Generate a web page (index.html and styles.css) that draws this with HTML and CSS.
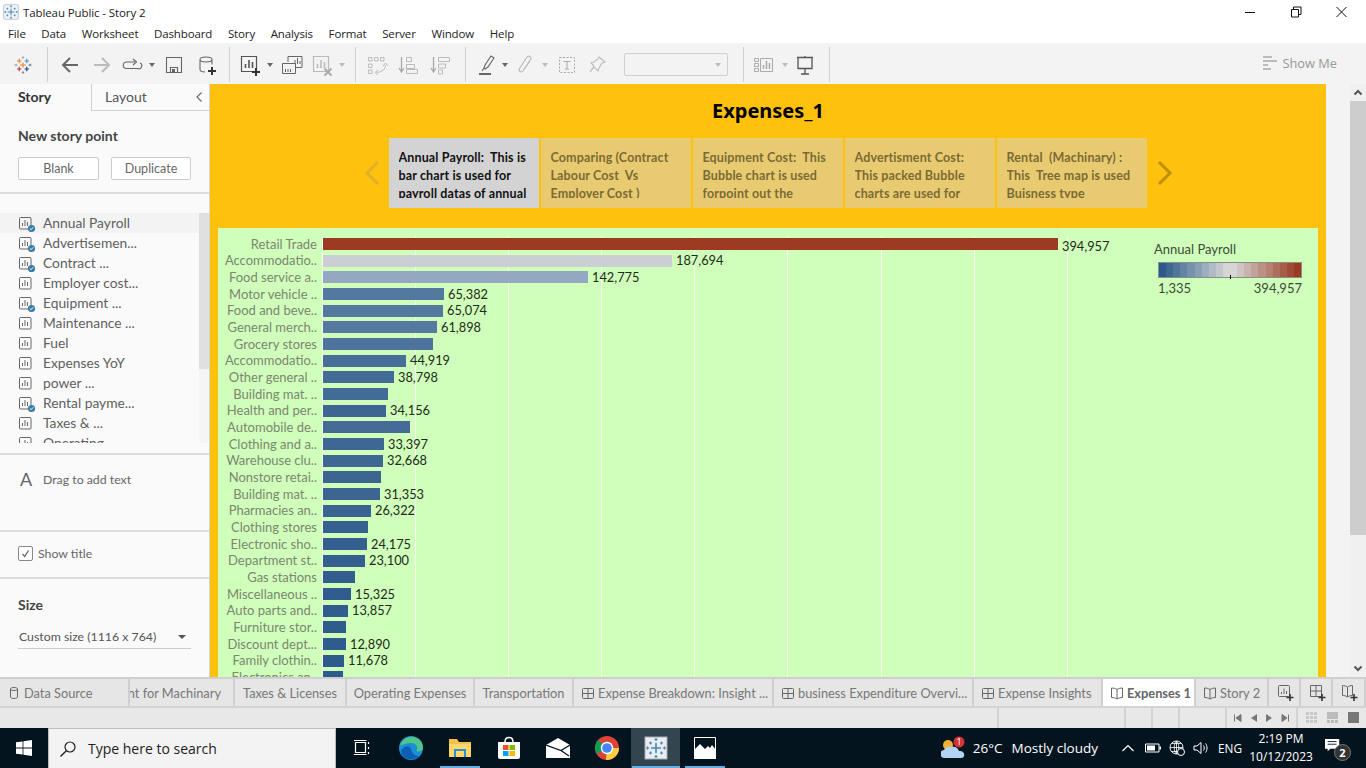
FILE: index.html
```html
<!DOCTYPE html>
<html lang="en">
<head>
<meta charset="utf-8">
<title>Tableau Public - Story 2</title>
<link rel="stylesheet" href="styles.css">
</head>
<body>
<svg class="defs" width="0" height="0" aria-hidden="true">
  <defs>
    <symbol id="sheet" viewBox="0 0 18 18"><rect x="1.5" y="2.5" width="11.5" height="11.5" rx="1" fill="none" stroke="#666"/><path d="M4.5 11V8M7 11V5M9.5 11V7" stroke="#666" fill="none"/></symbol>
    <symbol id="sheetb" viewBox="0 0 18 18"><rect x="1.5" y="2.5" width="11.5" height="11.5" rx="1" fill="none" stroke="#666"/><path d="M4.5 11V8M7 11V5M9.5 11V7" stroke="#666" fill="none"/><circle cx="13.5" cy="13.5" r="3.6" fill="#3a7ca5"/><path d="M11.8 13.5l1.2 1.2 2.2-2.4" stroke="#fff" fill="none"/></symbol>
    <symbol id="grid" viewBox="0 0 14 14"><rect x="1.5" y="2.5" width="11" height="10" rx="1" fill="none" stroke="#666"/><path d="M1.5 7.5h11M7 2.5v10" stroke="#666" fill="none"/></symbol>
    <symbol id="book" viewBox="0 0 14 14"><path d="M7 3.5C5.5 2.5 3.5 2 1.5 2v9.5c2 0 4 .5 5.500 1.500 1.500-1 3.500-1.500 5.500-1.500V2C10.500 2 8.500 2.500 7 3.500zM7 3.500V13" fill="none" stroke="#666"/></symbol>
    <symbol id="tlogo" viewBox="0 0 18 18"><g fill="none" stroke-width="1.200"><path d="M3 5h4.500M5.250 2.750v4.500" stroke="#e8892f"/><path d="M10.500 5H15M12.750 2.750v4.500" stroke="#5f93b3"/><path d="M6 9h6M9 6.500v5" stroke="#e8892f"/><path d="M.5 9h3M2 7.750v2.500" stroke="#8cb0c5"/><path d="M14.500 9h3M16 7.750v2.500" stroke="#6d7fa0"/><path d="M7.750 1.500h2.500M9 .25v2.500" stroke="#8cb0c5"/><path d="M7.750 16.500h2.500M9 15.250v2.500" stroke="#7d8ba6"/><path d="M3 13h4.500M5.250 10.750v4.500" stroke="#c73a4c"/><path d="M10.500 13H15M12.750 10.750v4.500" stroke="#27497d"/></g></symbol>
    <symbol id="snow" viewBox="0 0 24 24"><g fill="none" stroke="#4a88b5" stroke-width="1.200"><path d="M7 12h10M12 7v10" stroke-width="1.600"/><path d="M2 12h3M3.500 10.500v3M19 12h3M20.500 10.500v3M12 2v3M10.500 3.500h3M12 19v3M10.500 20.500h3"/><path d="M5 7h3M6.500 5.500v3M16 7h3M17.500 5.500v3M5 17h3M6.500 15.500v3M16 17h3M17.500 15.500v3"/></g></symbol>
  </defs>
</svg>

<header class="titlebar">
  <svg class="app-icon" viewBox="0 0 24 24"><rect x="1" y="1" width="22" height="22" rx="2" fill="#eef3f7" stroke="#9db5c6"/><use href="#snow"/></svg>
  <span class="app-title">Tableau Public - Story 2</span>
  <div class="win-controls">
    <svg class="win-btn" viewBox="0 0 46 20"><path d="M18 10.500h10" stroke="#111" fill="none"/></svg>
    <svg class="win-btn" viewBox="0 0 46 20"><path d="M18.500 7.500h7v7.500h-7zM20.500 7.500v-2.500h7.500v7.500h-2.500" stroke="#111" fill="none"/></svg>
    <svg class="win-btn" viewBox="0 0 46 20"><path d="M17.500 5l10 10M27.500 5l-10 10" stroke="#111" fill="none"/></svg>
  </div>
</header>

<nav class="menubar">
  <span>File</span><span>Data</span><span>Worksheet</span><span>Dashboard</span><span>Story</span><span>Analysis</span><span>Format</span><span>Server</span><span>Window</span><span>Help</span>
</nav>

<div class="toolbar">
  <div class="tgroup logo-group">
    <svg class="tlogo" viewBox="0 0 18 18"><use href="#tlogo"/></svg>
  </div>
  <div class="tgroup group-a">
    <span class="ti"><svg class="ticon" viewBox="0 0 24 24"><path d="M5 12h15M12 5l-7 7 7 7" fill="none" stroke="#666" stroke-width="2"/></svg></span>
    <span class="ti"><svg class="ticon" viewBox="0 0 24 24"><path d="M4 12h15M12 5l7 7-7 7" fill="none" stroke="#bbb" stroke-width="2"/></svg></span>
    <span class="ti wide"><svg class="ticon" viewBox="0 0 24 24"><path d="M15 9H6.500a3 3 0 0 0 0 6.500h11a3 3 0 0 0 2.500-5.500M13 6l3.500 3-3.500 3" fill="none" stroke="#666" stroke-width="1.100"/></svg><i class="caret"></i></span>
    <span class="ti"><svg class="ticon" viewBox="0 0 24 24"><path d="M4.500 4.500h15v15h-15zM8.500 19.500v-5h7v5" fill="none" stroke="#666" stroke-width="1.100"/><rect x="10" y="16" width="3" height="3.500" fill="#666"/></svg></span>
    <span class="ti"><svg class="ticon" viewBox="0 0 24 24"><path d="M6 6.500v10c0 1.500 2 2.500 5 2.500M18 6.500v5M6 6.500c0-1.500 2.500-2.500 6-2.500s6 1 6 2.500-2.500 2.500-6 2.500-6-1-6-2.500z" fill="none" stroke="#666" stroke-width="1.100"/><path d="M18 14v8M14 18h8" stroke="#333" stroke-width="2"/></svg></span>
  </div>
  <div class="tgroup group-b">
    <span class="ti wide"><svg class="ticon" viewBox="0 0 24 24"><path d="M3.500 3.500h15v15h-15z" fill="none" stroke="#555" stroke-width="1.200"/><path d="M7.500 15v-4M11 15V7M14.500 15v-6" stroke="#555" stroke-width="1.600"/><path d="M18 15v8M14 19h8" stroke="#333" stroke-width="2"/></svg><i class="caret"></i></span>
    <span class="ti"><svg class="ticon" viewBox="0 0 24 24"><path d="M8 9V3.500h14v11h-6" fill="none" stroke="#666"/><path d="M2.500 10.500h13v10h-13z" fill="#f3f3f3" stroke="#666"/><path d="M15 11V7M17.500 11V5M20 11V8M5.500 19v-3M8 19v-3M10.500 19v-3" stroke="#666"/></svg></span>
    <span class="ti wide"><svg class="ticon" viewBox="0 0 24 24"><path d="M3.500 3.500h15v15h-15z" fill="none" stroke="#bbb" stroke-width="1.200"/><path d="M7.500 15v-4M11 15V7M14.500 15v-6" stroke="#bbb" stroke-width="1.600"/><path d="M14.500 15.500l7 7M21.500 15.500l-7 7" stroke="#aaa" stroke-width="2"/></svg><i class="caret off"></i></span>
  </div>
  <div class="tgroup group-c">
    <span class="ti"><svg class="ticon" viewBox="0 0 24 24"><path d="M3.500 4.500h3.500v3.500h-3.500zM9.500 4.500h3.500v3.500h-3.500zM15.500 4.500h3.500v3.500h-3.500zM3.500 11h3.500v3.500h-3.500zM3.500 17h3.500v3.500h-3.500zM20.500 12c0 4-3 7-9 7.500M18 13l2.500-3 2.500 3M13 17l-3 2.500 3 2.500" fill="none" stroke="#bbb"/></svg></span>
    <span class="ti"><svg class="ticon" viewBox="0 0 24 24"><path d="M4.500 4v14M2 15l2.500 4 2.500-4" fill="none" stroke="#aaa" stroke-width="1.300"/><path d="M9.500 4.500h5v4h-5zM9.500 11.500h8v4h-8zM9.500 16.500h11v4h-11z" fill="none" stroke="#bbb"/></svg></span>
    <span class="ti"><svg class="ticon" viewBox="0 0 24 24"><path d="M4.500 4v14M2 15l2.500 4 2.500-4" fill="none" stroke="#aaa" stroke-width="1.300"/><path d="M9.500 4.500h11v4h-11zM9.500 11h7v4h-7zM9.500 17h4v4h-4z" fill="none" stroke="#bbb"/></svg></span>
  </div>
  <div class="tgroup group-d">
    <span class="ti mid"><svg class="ticon" viewBox="0 0 24 24"><path d="M9 15l1-3 6-9 3 2-6 9-3 2zM9 15l-2 3" fill="none" stroke="#666" stroke-width="1.100"/><rect x="4" y="20" width="12" height="2" fill="#666"/></svg><i class="caret"></i></span>
    <span class="ti wide"><svg class="ticon" viewBox="0 0 24 24"><path d="M17 8l-7 10c-1.500 2-5 0-3.500-2.500L14 4c1.500-2 5 0 3.500 2.500L10.500 17" fill="none" stroke="#bbb" stroke-width="1.200"/></svg><i class="caret off"></i></span>
    <span class="ti"><svg class="ticon" viewBox="0 0 24 24"><rect x="4.500" y="4.500" width="15" height="15" fill="none" stroke="#aaa" stroke-dasharray="2 1.500"/><path d="M8.500 8.500h7M12 8.500v7.500M10 16h4" fill="none" stroke="#aaa"/></svg></span>
    <span class="ti pin"><svg class="ticon" viewBox="0 0 24 24"><path d="M14 4l6 5-3 1-3 5-1 3-4-4-4 5 4-6-3-3 3-1 4-3z" fill="none" stroke="#bbb" stroke-width="1.100"/></svg></span>
    <div class="combo"><i class="caret off"></i></div>
  </div>
  <div class="tgroup group-e">
    <span class="ti wide"><svg class="ticon" viewBox="0 0 24 24"><path d="M1.500 5.500h4v3h-4zM1.500 10.500h4v3h-4zM1.500 15.500h4v3h-4zM7.500 5.500h12v13h-12z" fill="none" stroke="#aaa"/><path d="M10.500 16v-4M13.500 16V8M16.500 16v-6" stroke="#aaa" stroke-width="1.500"/></svg><i class="caret off"></i></span>
    <span class="ti narrow"><svg class="ticon" viewBox="0 0 24 24"><path d="M4 4.500h16M5 5v10.500h14V5M12 3v2M12 16v5M8 21h8" fill="none" stroke="#555" stroke-width="1.300"/></svg></span>
  </div>
  <div class="showme">
    <svg class="showme-icon" viewBox="0 0 14 16"><path d="M0 1h9v2H0zM0 5h14v2H0zM0 9h5v2H0zM0 13h8v2H0z" fill="#bbb"/></svg>
    <span>Show Me</span>
  </div>
</div>

<div class="workspace">
  <aside class="sidebar">
    <div class="side-tabs">
      <div class="side-tab active">Story</div>
      <div class="side-tab">Layout<svg class="collapse" viewBox="0 0 8 12"><path d="M6.500 1.500L2 6l4.500 4.500" fill="none" stroke="#666" stroke-width="1.100"/></svg></div>
    </div>
    <section class="new-point">
      <h3 class="side-h">New story point</h3>
      <div class="btn-row"><button class="btn blank">Blank</button><button class="btn dup">Duplicate</button></div>
    </section>
    <section class="sheets">
      <ul class="sheet-list">
        <li class="sel"><svg><use href="#sheetb"/></svg>Annual Payroll</li>
        <li><svg><use href="#sheetb"/></svg>Advertisemen...</li>
        <li><svg><use href="#sheetb"/></svg>Contract ...</li>
        <li><svg><use href="#sheet"/></svg>Employer cost...</li>
        <li><svg><use href="#sheetb"/></svg>Equipment ...</li>
        <li><svg><use href="#sheet"/></svg>Maintenance ...</li>
        <li><svg><use href="#sheet"/></svg>Fuel</li>
        <li><svg><use href="#sheet"/></svg>Expenses YoY</li>
        <li><svg><use href="#sheet"/></svg>power ...</li>
        <li><svg><use href="#sheetb"/></svg>Rental payme...</li>
        <li><svg><use href="#sheet"/></svg>Taxes &amp; ...</li>
        <li><svg><use href="#sheet"/></svg>Operating ...</li>
      </ul>
      <div class="side-scroll"><div class="side-thumb"></div></div>
    </section>
    <section class="drag-text"><span class="big-a">A</span><span>Drag to add text</span></section>
    <section class="show-title">
      <span class="check"><svg viewBox="0 0 15 15"><path d="M4 8l2.500 3L11 4" fill="none" stroke="#555" stroke-width="1.300"/></svg></span>
      <span>Show title</span>
    </section>
    <section class="size">
      <h3 class="side-h">Size</h3>
      <div class="size-select"><span>Custom size (1116 x 764)</span><i class="caret dark"></i></div>
    </section>
  </aside>

  <main class="canvas">
    <div class="story">
      <h1 class="story-title">Expenses_1</h1>
      <div class="navigator">
        <svg class="chev" viewBox="0 0 16 26"><path d="M14 2L3 13l11 11" fill="none" stroke="#e0b02a" stroke-width="3"/></svg>
        <div class="point current"><p>Annual Payroll:  This is
bar chart is used for
payroll datas of annual</p></div>
        <div class="point"><p>Comparing (Contract
Labour Cost  Vs
Employer Cost )</p></div>
        <div class="point"><p>Equipment Cost:  This
Bubble chart is used
forpoint out the</p></div>
        <div class="point"><p>Advertisment Cost:
This packed Bubble
charts are used for</p></div>
        <div class="point"><p>Rental  (Machinary) :
This  Tree map is used
Buisness type</p></div>
        <svg class="chev next" viewBox="0 0 16 26"><path d="M2 2l11 11L2 24" fill="none" stroke="#bf8f08" stroke-width="3"/></svg>
      </div>
      <div class="viz">
        <div class="labels">
          <div>Retail Trade</div><div>Accommodatio..</div><div>Food service a..</div><div>Motor vehicle ..</div><div>Food and beve..</div><div>General merch..</div><div>Grocery stores</div><div>Accommodatio..</div><div>Other general ..</div><div>Building mat. ..</div><div>Health and per..</div><div>Automobile de..</div><div>Clothing and a..</div><div>Warehouse clu..</div><div>Nonstore retai..</div><div>Building mat. ..</div><div>Pharmacies an..</div><div>Clothing stores</div><div>Electronic sho..</div><div>Department st..</div><div>Gas stations</div><div>Miscellaneous ..</div><div>Auto parts and..</div><div>Furniture stor..</div><div>Discount dept...</div><div>Family clothin..</div><div>Electronics an..</div>
        </div>
        <div class="plot">
          <div class="row"><i style="width:735px;background:#9c3b22"></i><span class="v-far">394,957</span></div>
          <div class="row"><i style="width:349px;background:#cbced3"></i><span>187,694</span></div>
          <div class="row"><i style="width:265px;background:#95a8c1"></i><span>142,775</span></div>
          <div class="row"><i style="width:121px;background:#54799f"></i><span>65,382</span></div>
          <div class="row"><i style="width:120px;background:#54799f"></i><span>65,074</span></div>
          <div class="row"><i style="width:114px;background:#55799f"></i><span>61,898</span></div>
          <div class="row"><i style="width:110px;background:#4e749c"></i></div>
          <div class="row"><i style="width:83px;background:#486f99"></i><span>44,919</span></div>
          <div class="row"><i style="width:71px;background:#426b96"></i><span>38,798</span></div>
          <div class="row"><i style="width:65px;background:#426b96"></i></div>
          <div class="row"><i style="width:63px;background:#3d6792"></i><span>34,156</span></div>
          <div class="row"><i style="width:87px;background:#446c96"></i></div>
          <div class="row"><i style="width:61px;background:#3e6893"></i><span>33,397</span></div>
          <div class="row"><i style="width:60px;background:#3e6893"></i><span>32,668</span></div>
          <div class="row"><i style="width:58px;background:#3c6691"></i></div>
          <div class="row"><i style="width:57px;background:#3c6691"></i><span>31,353</span></div>
          <div class="row"><i style="width:48px;background:#3a6491"></i><span>26,322</span></div>
          <div class="row"><i style="width:45px;background:#356190"></i></div>
          <div class="row"><i style="width:44px;background:#346090"></i><span>24,175</span></div>
          <div class="row"><i style="width:42px;background:#346090"></i><span>23,100</span></div>
          <div class="row"><i style="width:32px;background:#315e8e"></i></div>
          <div class="row"><i style="width:28px;background:#305d8d"></i><span>15,325</span></div>
          <div class="row"><i style="width:25px;background:#305d8d"></i><span>13,857</span></div>
          <div class="row"><i style="width:23px;background:#2e5c8c"></i></div>
          <div class="row"><i style="width:23px;background:#2e5c8c"></i><span>12,890</span></div>
          <div class="row"><i style="width:21px;background:#2d5b8c"></i><span>11,678</span></div>
          <div class="row"><i style="width:20px;background:#2d5b8c"></i></div>
        </div>
        <div class="legend">
          <div class="legend-title">Annual Payroll</div>
          <div class="ramp"><b class="tick"></b></div>
          <div class="legend-values"><span>1,335</span><span>394,957</span></div>
        </div>
      </div>
    </div>
    <div class="gutter"></div>
    <div class="vscroll">
      <svg class="sarrow" viewBox="0 0 16 17"><path d="M4.500 10.500L8 7l3.500 3.500" fill="none" stroke="#555" stroke-width="2"/></svg>
      <div class="vthumb"></div>
      <div class="vtrack"></div>
      <svg class="sarrow" viewBox="0 0 16 17"><path d="M4.500 6.500L8 10l3.500-3.500" fill="none" stroke="#555" stroke-width="2"/></svg>
    </div>
  </main>
</div>

<div class="tabbar">
  <div class="tab"><svg class="tab-icon" viewBox="0 0 14 14"><path d="M3.500 3v8c0 1 1.500 1.500 3.500 1.500s3.500-.5 3.500-1.500V3M3.500 3c0-1 1.500-1.500 3.500-1.500s3.500.5 3.500 1.500S9 4.500 7 4.500 3.500 4 3.500 3z" fill="none" stroke="#666"/></svg>Data Source</div>
  <div class="tab clipped">nt for Machinary</div>
  <div class="tab center">Taxes &amp; Licenses</div>
  <div class="tab center">Operating Expenses</div>
  <div class="tab center">Transportation</div>
  <div class="tab"><svg class="tab-icon"><use href="#grid"/></svg>Expense Breakdown: Insight ...</div>
  <div class="tab"><svg class="tab-icon"><use href="#grid"/></svg>business Expenditure Overvi...</div>
  <div class="tab"><svg class="tab-icon"><use href="#grid"/></svg>Expense Insights</div>
  <div class="tab current"><svg class="tab-icon"><use href="#book"/></svg>Expenses 1</div>
  <div class="tab"><svg class="tab-icon"><use href="#book"/></svg>Story 2</div>
  <div class="tab add"><svg class="add-icon" viewBox="0 0 18 18"><rect x="1.500" y="1.500" width="11" height="11" rx="1" fill="none" stroke="#666"/><path d="M4.500 10V8M7 10V4.500M9.500 10V7" stroke="#666" fill="none"/><path d="M13 10v7M9.500 13.500h7" stroke="#333" stroke-width="1.600"/></svg></div>
  <div class="tab add"><svg class="add-icon" viewBox="0 0 18 18"><path d="M1.500 1.500h11v11h-11zM1.500 7h11M7 1.500v11" fill="none" stroke="#666"/><path d="M13 10v7M9.500 13.500h7" stroke="#333" stroke-width="1.600"/></svg></div>
  <div class="tab add"><svg class="add-icon" viewBox="0 0 18 18"><path d="M6.500 3C5 2 3 1.500 1.500 1.500v10c2 0 3.500.5 5 1.500 1.500-1 3-1.500 5-1.500v-10C9.500 1.500 8 2 6.500 3zM6.500 3v10" fill="none" stroke="#666"/><path d="M13 10v7M9.500 13.500h7" stroke="#333" stroke-width="1.600"/></svg></div>
</div>

<div class="statusbar">
  <div></div><div></div><div></div><div></div><div></div>
  <div class="pager">
    <svg viewBox="0 0 10 10"><path d="M1.500 1.500v7M8 1.500v7L3 5z" fill="#777" stroke="#777"/></svg>
    <svg viewBox="0 0 10 10"><path d="M8 1v8L2 5z" fill="#777"/></svg>
    <svg viewBox="0 0 10 10"><path d="M2 1v8l6-4z" fill="#777"/></svg>
    <svg viewBox="0 0 10 10"><path d="M8.500 1.500v7M2 1.500v7L7 5z" fill="#777" stroke="#777"/></svg>
  </div>
  <div class="views">
    <svg viewBox="0 0 12 12"><path d="M0 0h3v3H0zM4 0h3v3H4zM8 0h3v3H8zM0 4h3v3H0zM4 4h3v3H4zM8 4h3v3H8zM0 8h3v3H0zM4 8h3v3H4zM8 8h3v3H8z" fill="#c8c8c8"/></svg>
    <svg viewBox="0 0 12 12"><path d="M0 0h11v7H0zM0 8h3v3H0zM4 8h3v3H4zM8 8h3v3H8z" fill="#bbb"/></svg>
    <svg viewBox="0 0 12 12"><path d="M0 0h11v11H0z" fill="#777"/></svg>
  </div>
</div>

<footer class="taskbar">
  <div class="start"><svg viewBox="0 0 16 16"><path d="M0 2.300l6.600-.9v6.200H0zM7.400 1.300L16 0v7.600H7.400zM0 8.400h6.600v6.200L0 13.700zM7.400 8.400H16V16l-8.600-1.300z" fill="#fff"/></svg></div>
  <div class="search">
    <svg viewBox="0 0 18 18"><circle cx="11" cy="7" r="5" fill="none" stroke="#222" stroke-width="1.200"/><path d="M7.300 10.700L1.500 16.500" stroke="#222" stroke-width="1.400"/></svg>
    <span>Type here to search</span>
  </div>
  <div class="task-apps">
    <div class="app"><svg viewBox="0 0 18 18"><path d="M2.500 3.500h10v10h-10zM1 1.500h12.500M1 15.500h12.500M15.500 3v2M15.500 8v2M15.500 13v2" fill="none" stroke="#fff" stroke-width="1.200"/></svg></div>
    <div class="app"><svg class="app-lg" viewBox="0 0 24 24"><circle cx="12" cy="12" r="12" fill="#1b8fd6"/><path d="M1 10C3 2 12-1 18 2c4 2 6 6 6 10 0 3-4 4-7 3 3-2 1-8-5-8-5 0-9 2-11 3z" fill="#4fc58a"/><path d="M2 15c3-6 9-6 10-2s3 7 8 7c-5 5-14 4-17-1z" fill="#0c5fb5"/></svg></div>
    <div class="app on"><svg class="app-lg" viewBox="0 0 24 24"><path d="M1 3h8l2 3h12v6H1z" fill="#f2c14e"/><path d="M1 8h22v13H1z" fill="#ffd869"/><path d="M6 13h12v8h-2v-6H8v6H6z" fill="#2f8ed8"/></svg></div>
    <div class="app"><svg class="app-lg" viewBox="0 0 24 24"><path d="M8 6c0-6 8-6 8 0" fill="none" stroke="#fff" stroke-width="1.500"/><path d="M1 6h22v15a2 2 0 0 1-2 2H3a2 2 0 0 1-2-2z" fill="#fff"/><path d="M6 9h5.500v5H6z" fill="#f25022"/><path d="M12.500 9H18v5h-5.500z" fill="#7fba00"/><path d="M6 15h5.500v5H6z" fill="#00a4ef"/><path d="M12.500 15H18v5h-5.500z" fill="#ffb900"/></svg></div>
    <div class="app"><svg class="app-lg" viewBox="0 0 24 24"><path d="M0 9L12 2l12 7v13H0z" fill="#fff"/><path d="M0 9l15 5.500L24 9M15 14.500L23 20" fill="none" stroke="#04141f" stroke-width="1.300"/></svg></div>
    <div class="app"><svg class="app-lg" viewBox="0 0 24 24"><circle cx="12" cy="12" r="12" fill="#db4437"/><path d="M12 12L1.600 18A12 12 0 0 1 3 4l9 8z" fill="#0f9d58"/><path d="M12 12h12a12 12 0 0 1-13 12z" fill="#ffcd40"/><circle cx="12" cy="12" r="6.200" fill="#fff"/><circle cx="12" cy="12" r="4.800" fill="#4285f4"/></svg></div>
    <div class="app on active"><svg class="app-lg" viewBox="0 0 24 24"><rect x="1" y="1" width="22" height="22" fill="#e8edf1" stroke="#aab"/><use href="#snow"/></svg></div>
    <div class="app on"><svg class="app-lg" viewBox="0 0 24 24"><path d="M1.500 1.500h21v21h-21z" fill="#04141f" stroke="#fff"/><path d="M1 23V14l6-6 5 5 3-3 2 2 2-3 4 5v9z" fill="#fff"/></svg></div>
  </div>
  <div class="tray">
    <svg class="weather" viewBox="0 0 25 24"><circle cx="7" cy="9" r="5" fill="#f2b233"/><path d="M4 22a4 4 0 0 1-1-8c1-3 5-4 8-3 3-1 6 1 7 4 6-1 7 7 2 7z" fill="#b3d3f2"/><circle cx="18" cy="6" r="5.500" fill="#d13438"/><text x="18" y="9" class="w-badge">1</text></svg>
    <span class="temp">26°C</span>
    <span class="cond">Mostly cloudy</span>
    <svg class="tray-i chevup" viewBox="0 0 16 16"><path d="M2.500 11L8 5.500l5.500 5.500" fill="none" stroke="#fff" stroke-width="1.200"/></svg>
    <svg class="tray-i batt" viewBox="0 0 16 16"><path d="M.5 4h13.500v8H.5z" fill="none" stroke="#fff"/><path d="M2 5.500h8v5H2zM14.500 6.500H16v3h-1.500z" fill="#fff"/></svg>
    <svg class="tray-i globe" viewBox="0 0 16 16"><circle cx="7.500" cy="7.500" r="6.500" fill="none" stroke="#fff" stroke-width=".9"/><path d="M1 7.500h13M7.500 1v13M3 3.500h9M3 11.500h9M7.500 1c-3 2-3 11 0 13M7.500 1c3 2 3 11 0 13" fill="none" stroke="#fff" stroke-width=".8"/><circle cx="12" cy="12" r="3.500" fill="#04141f" stroke="#fff"/></svg>
    <svg class="tray-i spk" viewBox="0 0 16 16"><path d="M1 6h3l4-3.500v11L4 10H1zM10.500 5.500c1 1.500 1 3.500 0 5M12.500 3.500c2 2.500 2 6.500 0 9" fill="none" stroke="#fff"/></svg>
    <span class="lang">ENG</span>
    <div class="clock"><span>2:19 PM</span><span>10/12/2023</span></div>
    <div class="notif"><svg viewBox="0 0 18 18"><path d="M0 1h16v11H6l-3 3v-3H0z" fill="#fff"/><path d="M3 4h10M3 7h10" stroke="#04141f" fill="none"/></svg><b class="notif-badge">2</b></div>
  </div>
</footer>
</body>
</html>
```

FILE: styles.css
```css
* { box-sizing: border-box; }
html, body { margin: 0; padding: 0; }
body {
  width: 1366px; height: 768px; overflow: hidden;
  display: flex; flex-direction: column;
  background: #fff; color: #222;
  font-family: "Open Sans", "Liberation Sans", sans-serif;
  font-size: 12px;
}
.defs { position: absolute; }
i { font-style: normal; }

/* title + menu */
.titlebar { height: 24px; display: flex; align-items: center; padding-left: 3px; background: #fff; flex: none; }
.app-icon { width: 16px; height: 16px; }
.app-title { margin-left: 4px; font-size: 11.500px; color: #222; letter-spacing: -.1px; }
.win-controls { margin-left: auto; display: flex; padding-right: 1px; }
.win-btn { width: 46px; height: 20px; }
.menubar { height: 19px; flex: none; display: flex; align-items: center; padding-left: 8px; gap: 15.600px; font-size: 11.500px; color: #222; letter-spacing: -.12px; }

/* toolbar */
.toolbar { height: 41px; flex: none; display: flex; align-items: center; background: #f3f3f3; }
.tgroup { display: flex; align-items: center; height: 35px; margin-top: 2px; border-right: 1px solid #cfcfcf; }
.logo-group { width: 48px; padding-left: 14px; }
.tlogo { width: 18px; height: 18px; }
.group-a { width: 182px; padding-left: 6px; }
.group-b { width: 126px; padding-left: 6px; }
.group-c { width: 110px; padding-left: 5px; }
.group-d { width: 278px; padding-left: 7px; }
.group-e { width: 86px; padding-left: 7px; }
.ticon { width: 24px; height: 24px; flex: none; }
.ti { width: 32px; display: flex; align-items: center; justify-content: center; flex: none; }
.ti.wide { width: 40px; justify-content: flex-start; padding-left: 2px; gap: 5px; }
.ti.mid { width: 38px; justify-content: flex-start; padding-left: 2px; gap: 3px; }
.ti.narrow { width: 28px; }
.ti.pin { width: 28px; }
.caret { width: 0; height: 0; border: 3px solid transparent; border-top-width: 4px; border-top-color: #666; border-bottom: 0; flex: none; }
.caret.off { border-top-color: #bbb; }
.caret.dark { border-top-color: #555; border-left-width: 4px; border-right-width: 4px; }
.combo { width: 104px; height: 23px; margin-left: 13px; border: 1px solid #cfcfcf; border-radius: 2px; display: flex; align-items: center; justify-content: flex-end; padding-right: 6px; background: #f3f3f3; }
.showme { margin-left: auto; padding-right: 29px; display: flex; align-items: center; gap: 6px; color: #999; font-size: 12.800px; margin-top: -1px; }
.showme-icon { width: 14px; height: 16px; }

/* workspace */
.workspace { height: 593px; flex: none; display: flex; overflow: hidden; }
.sidebar { width: 210px; flex: none; background: #fafafa; border-right: 1px solid #d4d4d4; display: flex; flex-direction: column; color: #555; font-family: Lato, "Open Sans", sans-serif; font-size: 12.300px; }
.side-tabs { display: flex; height: 27px; flex: none; }
.side-tab { display: flex; align-items: center; padding: 0 0 2px 18px; font-size: 14px; color: #555; }
.side-tab.active { width: 92px; font-weight: 700; color: #333; border-right: 1px solid #cfcfcf; }
.side-tab:not(.active) { flex: 1; padding-left: 13px; border-bottom: 1px solid #cfcfcf; position: relative; }
.collapse { width: 8px; height: 12px; position: absolute; right: 6px; top: 7px; }
.new-point { height: 83px; flex: none; padding: 16px 18px 0; border-bottom: 2px solid #dcdcdc; }
.side-h { margin: 0; font-size: 14px; font-weight: 700; color: #444; line-height: 18px; }
.btn-row { display: flex; gap: 12px; margin-top: 12px; }
.btn { height: 23px; background: #fff; border: 1px solid #ccc; border-radius: 2px; font: inherit; font-size: 12.500px; color: #666; padding: 0 0 1px; }
.btn.blank { width: 81px; }
.btn.dup { width: 80px; }
.sheets { height: 261px; flex: none; padding-top: 19px; border-bottom: 2px solid #dcdcdc; position: relative; }
.sheet-list { list-style: none; margin: 0; padding: 0; height: 230px; overflow: hidden; }
.sheet-list li { height: 20px; display: flex; align-items: center; padding: 0 0 0 18px; font-size: 13.800px; color: #5f5f5f; white-space: nowrap; line-height: 18px; }
.sheet-list li.sel { background: #f3f3f3; }
.sheet-list svg { width: 18px; height: 18px; margin-right: 7px; flex: none; margin-top: 2px; }
.side-scroll { position: absolute; right: 0; top: 19px; width: 10px; height: 230px; background: #f5f5f5; }
.side-thumb { height: 156px; background: #e0e0e0; }
.drag-text { height: 77px; flex: none; padding: 14px 0 0 20px; display: flex; align-items: flex-start; gap: 13px; border-bottom: 2px solid #dcdcdc; color: #666; line-height: 22px; }
.big-a { font-size: 18px; color: #666; width: 10px; margin-top: -1px; }
.show-title { height: 47px; flex: none; display: flex; align-items: center; padding: 0 0 2px 18px; gap: 5px; border-bottom: 2px solid #dcdcdc; color: #666; }
.check { width: 15px; height: 15px; border: 1px solid #888; border-radius: 2px; background: #fff; display: flex; }
.size { padding: 17px 18px 0; flex: 1; }
.size-select { margin-top: 9px; height: 26px; border-bottom: 1px solid #ccc; display: flex; align-items: center; justify-content: space-between; padding: 2px 5px 0 1px; color: #555; }

/* story canvas */
.canvas { flex: 1; display: flex; min-width: 0; background: #f3f3f3; }
.story { width: 1116px; flex: none; background: #fec20e; display: flex; flex-direction: column; padding: 0 8px; overflow: hidden; }
.story-title { margin: 0; height: 54px; padding-top: 14px; text-align: center; font-size: 20px; line-height: 26px; font-weight: 700; color: #000; font-family: "Noto Sans", "Open Sans", sans-serif; flex: none; }
.navigator { height: 70px; flex: none; display: flex; align-items: center; justify-content: center; gap: 2px; font-family: Lato, "Open Sans", sans-serif; }
.chev { width: 16px; height: 26px; flex: none; margin-right: 7px; }
.chev.next { margin: 0 0 0 8px; }
.point { width: 150px; height: 70px; background: #e8cb70; padding: 11px 5px 0 10px; color: #7b6a35; font-size: 12.500px; font-weight: 700; letter-spacing: .13px; flex: none; }
.point p { margin: 0; height: 49px; overflow: hidden; line-height: 18px; white-space: pre; }
.point.current { background: #d3d3d3; color: #111; }
.viz { margin-top: 20px; height: 449px; background: #cfffbb; display: flex; position: relative; padding-top: 7.660px; flex: none; overflow: hidden; font-family: Lato, "Open Sans", sans-serif; }
.labels { width: 99px; flex: none; margin-right: 5px; text-align: right; color: #7c8670; font-size: 13px; }
.labels div { height: 16.680px; line-height: 16.680px; white-space: nowrap; }
.plot { width: 747px; flex: none; height: 460px; position: relative; padding-left: 1px;
  background-image: repeating-linear-gradient(to right, #f5fcef 0, #f5fcef 1px, transparent 1px, transparent 93.100px);
}
.row { height: 16.680px; display: flex; align-items: center; gap: 4px; white-space: nowrap; color: #1c2a18; font-size: 12.800px; }
.row i { height: 12px; display: block; flex: none; }
.row span { margin-top: -1px; }
.row .v-far { margin-top: 4px; }
.legend { position: absolute; left: 936px; top: 13px; width: 150px; font-size: 13px; color: #3c4a38; }
.legend-title { line-height: 16px; }
.ramp { position: relative; margin: 5px 0 0 4px; width: 144px; height: 16px; border: 1px solid #8a8f85;
  background: linear-gradient(to right,
    #2a5b8c 0 5%, #3d698f 0 10%, #507698 0 15%, #6384a5 0 20%, #7692ad 0 25%, #899fb5 0 30%, #9cadbd 0 35%, #afbbc6 0 40%, #c2c8ce 0 45%, #d6d6d6 0 50%,
    #d6d6d6 0 55%, #cfc5c2 0 60%, #c9b3ae 0 65%, #c2a299 0 70%, #bb9185 0 75%, #b57f71 0 80%, #ae6e5d 0 85%, #a75d48 0 90%, #a14b34 0 95%, #9a3a20 0 100%);
}
.tick { position: absolute; left: 71px; bottom: -2px; width: 1px; height: 4px; background: #111; }
.legend-values { display: flex; justify-content: space-between; margin: 2px 0 0 4px; width: 144px; line-height: 17px; }
.gutter { width: 24px; flex: none; }
.vscroll { width: 16px; flex: none; background: #f0f0f0; display: flex; flex-direction: column; }
.sarrow { width: 16px; height: 17px; flex: none; }
.vthumb { height: 434px; background: #cdcdcd; flex: none; }
.vtrack { flex: 1; }

/* tabs */
.tabbar { height: 31px; flex: none; display: grid; grid-template-columns: 130px 105px 112px 128px 99px 200px 200px 129px 93px 73px 32px 32px 33px; background: #e6e6e6; border-top: 2px solid #cfcfcf; border-bottom: 2px solid #d3d3d3; font-family: Lato, "Open Sans", sans-serif; font-size: 12.800px; color: #777; }
.tab { display: flex; align-items: center; padding-left: 7px; gap: 3px; border-right: 2px solid #cfcfcf; overflow: hidden; white-space: nowrap; }
.tab.center { justify-content: center; padding-left: 0; }
.tab.clipped { padding: 0 12px 0 0; justify-content: flex-end; }
.tab.current { background: #fff; font-weight: 700; color: #666; }
.tab.add { padding-left: 8px; }
.tab-icon { width: 14px; height: 14px; flex: none; }
.add-icon { width: 18px; height: 18px; }
.statusbar { height: 20px; flex: none; display: grid; grid-template-columns: 999px 127px 27px 27px 47px 71px 68px; background: #e8e8e8; }
.statusbar > div { border-right: 2px solid #d3d3d3; }
.statusbar > div:last-child { border-right: 0; }
.pager { display: flex; align-items: center; justify-content: space-around; padding: 0 3px; }
.pager svg { width: 10px; height: 10px; }
.views { display: flex; align-items: center; gap: 9px; padding-left: 8px; }
.views svg { width: 12px; height: 12px; }

/* taskbar */
.taskbar { height: 40px; flex: none; display: flex; background: #04141f; color: #fff; }
.start { width: 48px; display: flex; align-items: center; justify-content: center; flex: none; }
.start svg { width: 16px; height: 16px; }
.search { width: 288px; flex: none; background: #f3f3f3; border: 1px solid #b8bcbf; border-bottom: 0; display: flex; align-items: center; padding-left: 10px; gap: 11px; color: #222; font-size: 14px; }
.search svg { width: 18px; height: 18px; }
.task-apps { display: flex; margin-left: 1px; }
.app { width: 49px; display: flex; align-items: center; justify-content: center; position: relative; }
.app svg { width: 18px; height: 18px; }
.app .app-lg { width: 24px; height: 24px; }
.app.active { background: #33454f; }
.app.on::after { content: ""; position: absolute; bottom: 0; left: 5px; right: 4px; height: 2px; background: #63aee6; }
.app.active::after { left: 1px; right: 0; }
.tray { margin-left: auto; display: flex; align-items: center; font-size: 13.500px; }
.weather { width: 25px; height: 24px; }
.w-badge { font-size: 9px; fill: #fff; text-anchor: middle; font-family: "Open Sans", sans-serif; }
.temp { margin-left: 7px; }
.cond { margin-left: 9px; }
.tray-i { width: 16px; height: 16px; }
.chevup { margin-left: 22px; }
.batt { margin-left: 9px; }
.globe { margin-left: 8px; }
.spk { margin-left: 8px; }
.lang { margin-left: 9px; font-size: 11.800px; }
.clock { margin-left: 10px; width: 58px; display: flex; flex-direction: column; align-items: center; font-size: 12px; line-height: 18px; white-space: nowrap; }
.notif { position: relative; width: 56px; padding-left: 15px; height: 24px; }
.notif svg { width: 16px; height: 16px; margin-top: 2px; }
.notif-badge { position: absolute; left: 24px; top: 8px; width: 17px; height: 17px; border-radius: 50%; background: #333; border: 1px solid #777; font-size: 11px; line-height: 15px; text-align: center; }
```
